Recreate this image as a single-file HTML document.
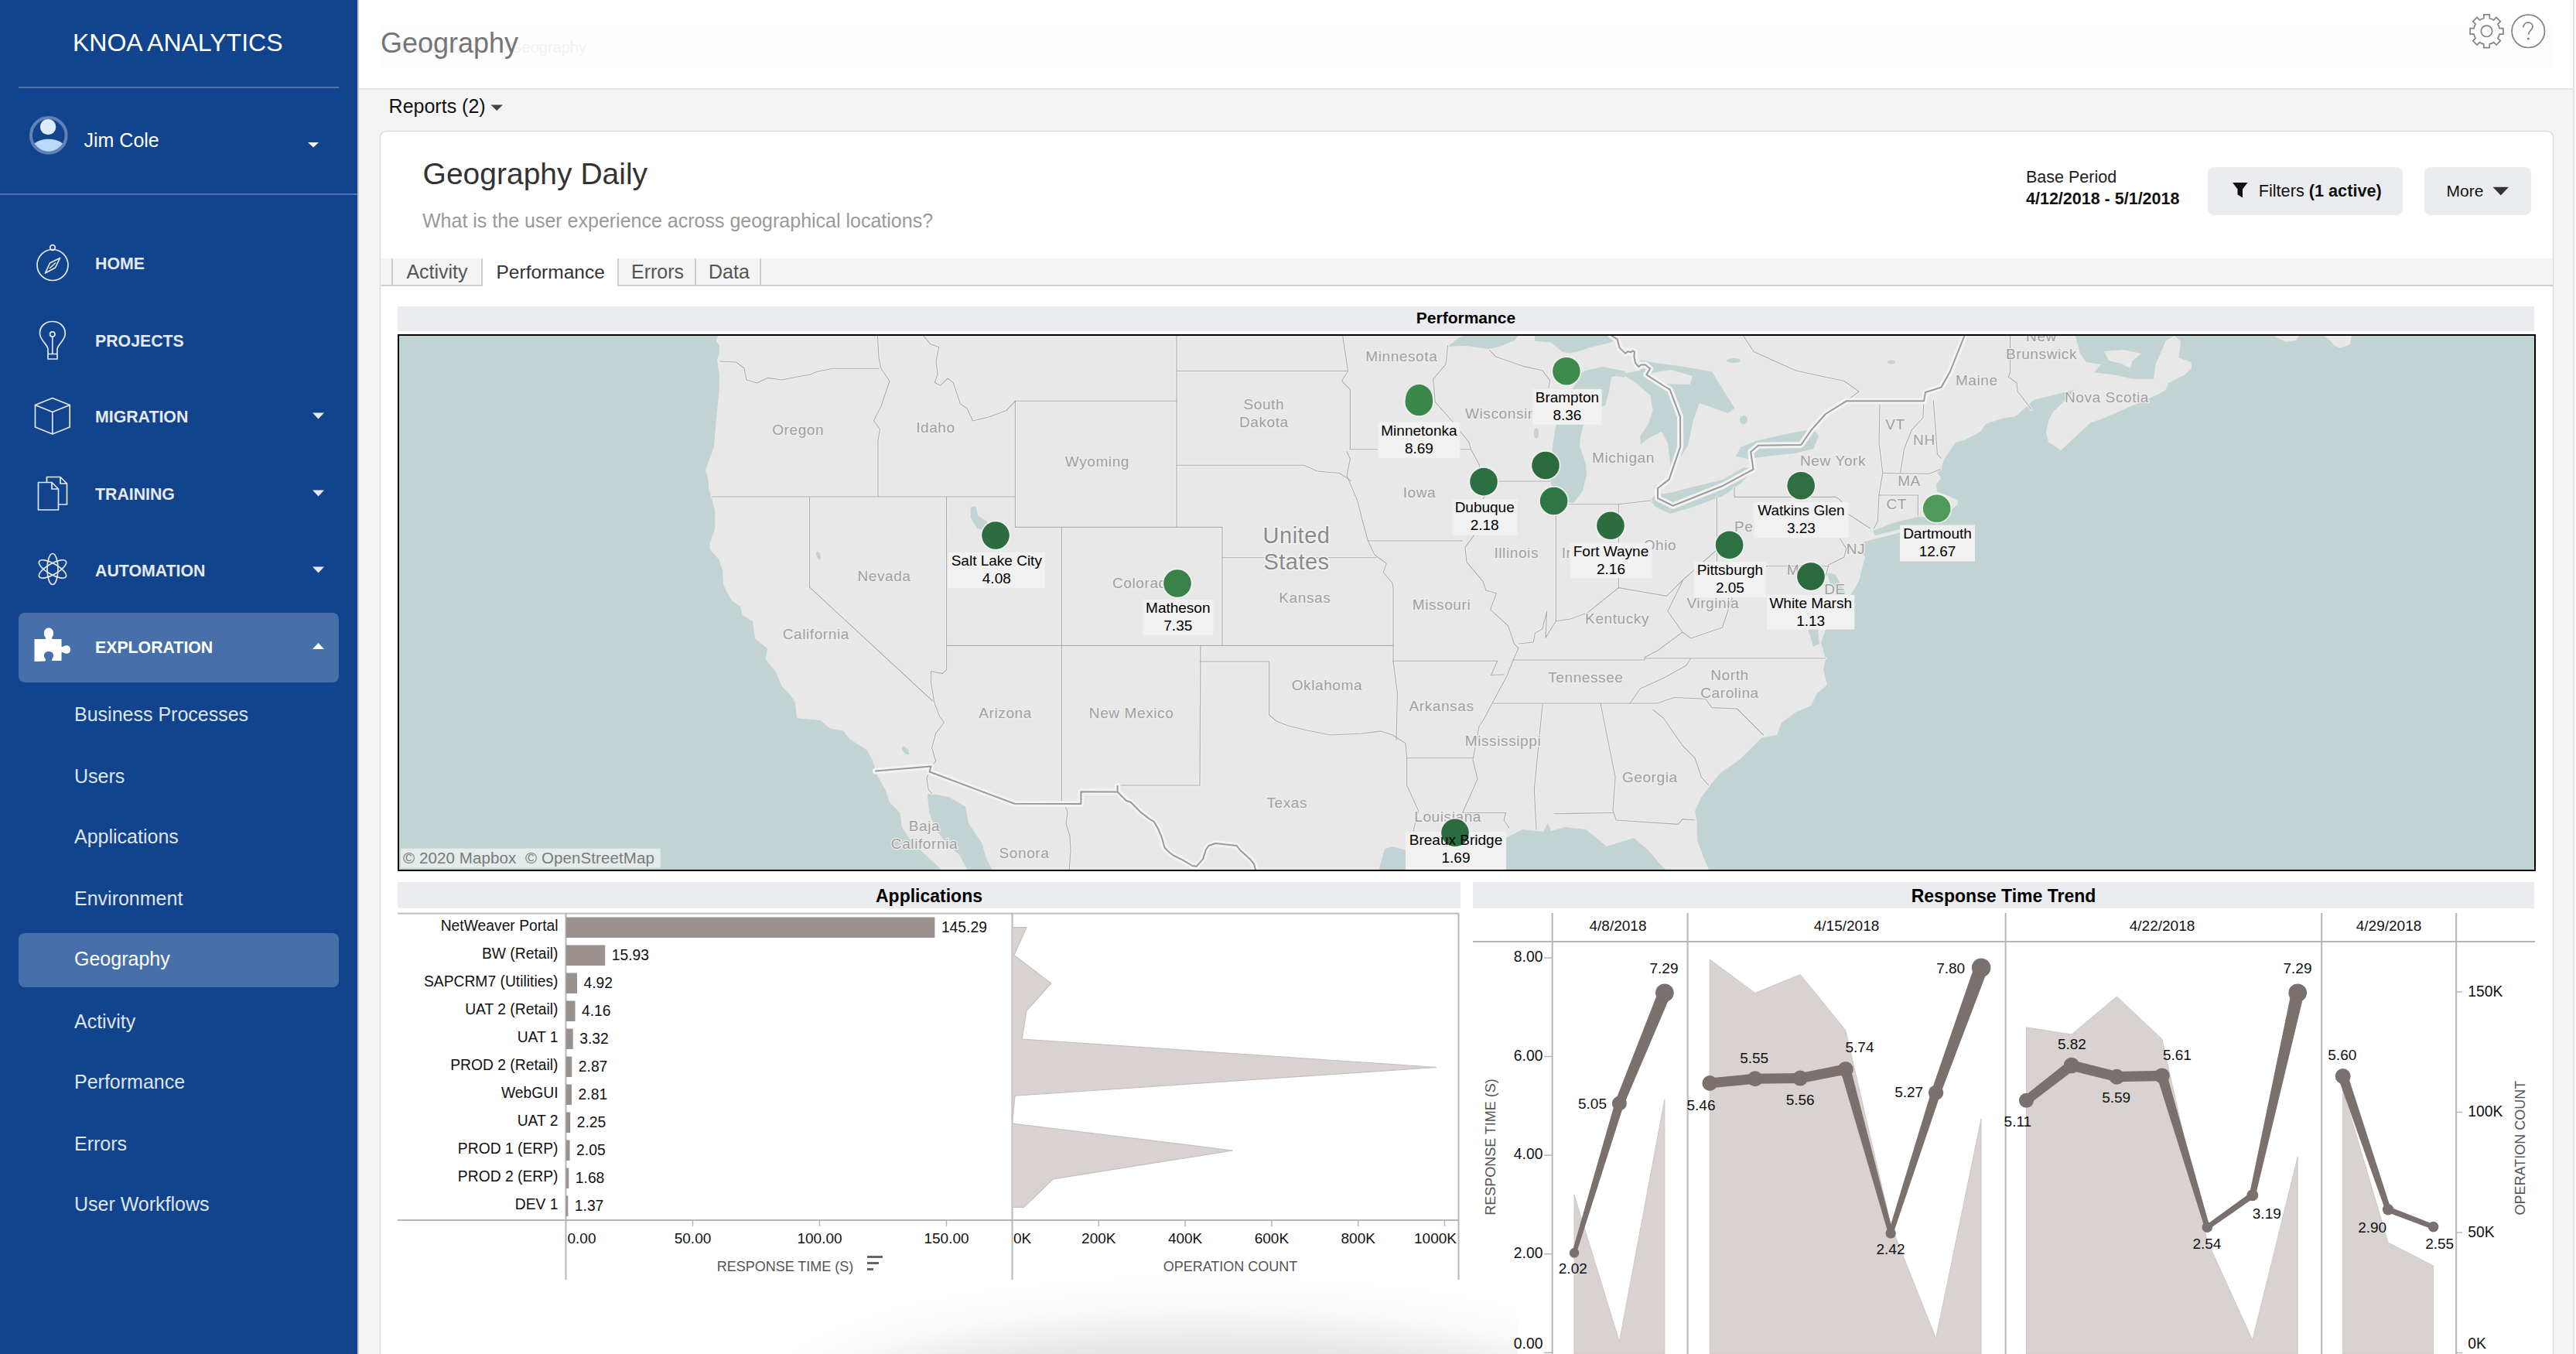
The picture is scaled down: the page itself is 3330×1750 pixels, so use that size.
<!DOCTYPE html><html><head><meta charset="utf-8"><title>Geography</title><style>html,body{margin:0;padding:0;width:3330px;height:1750px;overflow:hidden;background:#f4f4f4}svg{display:block;font-family:"Liberation Sans",sans-serif}</style></head><body>
<svg width="3330" height="1750" viewBox="0 0 3330 1750">
<defs><clipPath id="mapclip"><rect x="516" y="434" width="2760" height="690"/></clipPath><filter id="blur" x="-50%" y="-50%" width="200%" height="200%"><feGaussianBlur stdDeviation="35"/></filter><clipPath id="shclip"><rect x="492" y="1600" width="1470" height="150"/></clipPath></defs>
<rect x="0" y="0" width="3330" height="1750" fill="#f4f4f4" />
<rect x="462" y="0" width="2864" height="114" fill="#ffffff" />
<rect x="462" y="114" width="2864" height="2" fill="#e3e3e3" />
<rect x="493" y="31" width="2807" height="58" fill="#fdfdfd" rx="8" />
<rect x="3326" y="0" width="2" height="1750" fill="#e2e2e2" />
<rect x="3328" y="0" width="2" height="1750" fill="#fafafa" />
<text x="517.0" y="68.0" font-size="20" fill="#f1f1f4" text-anchor="start" >Exploration</text>
<text x="659.0" y="68.0" font-size="20" fill="#f1f1f4" text-anchor="start" >Geography</text>
<text x="492.0" y="67.8" font-size="36" fill="#757575" text-anchor="start" >Geography</text>
<path d="M3210.75,23.72 L3210.75,18.90 L3218.25,18.90 L3218.25,23.72 A17.0,17.0 0 0 1 3223.57,25.92 L3226.98,22.52 L3232.28,27.82 L3228.88,31.23 A17.0,17.0 0 0 1 3231.08,36.55 L3235.90,36.55 L3235.90,44.05 L3231.08,44.05 A17.0,17.0 0 0 1 3228.88,49.37 L3232.28,52.78 L3226.98,58.08 L3223.57,54.68 A17.0,17.0 0 0 1 3218.25,56.88 L3218.25,61.70 L3210.75,61.70 L3210.75,56.88 A17.0,17.0 0 0 1 3205.43,54.68 L3202.02,58.08 L3196.72,52.78 L3200.12,49.37 A17.0,17.0 0 0 1 3197.92,44.05 L3193.10,44.05 L3193.10,36.55 L3197.92,36.55 A17.0,17.0 0 0 1 3200.12,31.23 L3196.72,27.82 L3202.02,22.52 L3205.43,25.92 A17.0,17.0 0 0 1 3210.75,23.72 Z" fill="none" stroke="#828282" stroke-width="1.7" stroke-linejoin="miter"/>
<circle cx="3214.5" cy="40.3" r="7.2" fill="none" stroke="#828282" stroke-width="1.7"/>
<circle cx="3268.3" cy="40.3" r="21.2" fill="none" stroke="#828282" stroke-width="1.7"/>
<path d="M3262,35.6 C3262,31.5 3264.8,29.1 3268.3,29.1 C3271.8,29.1 3274,31.6 3274,34.4 C3274,38.6 3268.5,39.2 3268.5,44.7" fill="none" stroke="#828282" stroke-width="1.7"/>
<circle cx="3268.4" cy="50" r="1.6" fill="#828282"/>
<rect x="462" y="0" width="2" height="1750" fill="#c9c9c9" />
<rect x="0" y="0" width="462" height="1750" fill="#12438d" />
<text x="94.0" y="66.2" font-size="32" fill="#ffffff" text-anchor="start" >KNOA ANALYTICS</text>
<rect x="24" y="112" width="414" height="2" fill="#4f74ab" />
<clipPath id="avclip"><circle cx="62.8" cy="174.9" r="21.5"/></clipPath>
<g clip-path="url(#avclip)"><ellipse cx="62.8" cy="193.5" rx="22.5" ry="13.8" fill="#b9dafa"/></g>
<circle cx="62.1" cy="164" r="10.2" fill="#ddecfc"/>
<circle cx="62.8" cy="174.9" r="22.8" fill="none" stroke="#6281b6" stroke-width="4"/>
<text x="108.5" y="190.0" font-size="25" fill="#ffffff" text-anchor="start" >Jim Cole</text>
<polygon points="398.0,184.0 412.0,184.0 405.0,190.5" fill="#ffffff" />
<rect x="0" y="250" width="462" height="2" fill="#4f74ab" />
<text x="123.0" y="348.0" font-size="21.3" fill="#e4e9f3" font-weight="700" text-anchor="start" >HOME</text>
<text x="123.0" y="448.0" font-size="21.3" fill="#e4e9f3" font-weight="700" text-anchor="start" >PROJECTS</text>
<text x="123.0" y="546.0" font-size="21.3" fill="#e4e9f3" font-weight="700" text-anchor="start" >MIGRATION</text>
<text x="123.0" y="646.0" font-size="21.3" fill="#e4e9f3" font-weight="700" text-anchor="start" >TRAINING</text>
<text x="123.0" y="745.0" font-size="21.3" fill="#e4e9f3" font-weight="700" text-anchor="start" >AUTOMATION</text>
<polygon points="404.0,533.5 419.0,533.5 411.5,541.5" fill="#e4e9f3" />
<polygon points="404.0,633.5 419.0,633.5 411.5,641.5" fill="#e4e9f3" />
<polygon points="404.0,732.5 419.0,732.5 411.5,740.5" fill="#e4e9f3" />
<rect x="24" y="792" width="414" height="90" fill="#4770ab" rx="8" />
<text x="123.0" y="844.0" font-size="21.3" fill="#ffffff" font-weight="700" text-anchor="start" >EXPLORATION</text>
<polygon points="404.0,839.0 419.0,839.0 411.5,831.0" fill="#ffffff" />
<circle cx="68" cy="342.5" r="20" fill="none" stroke="#e4e9f3" stroke-width="1.7" stroke-linejoin="round" stroke-linecap="round"/>
<circle cx="68" cy="320" r="3.3" fill="none" stroke="#e4e9f3" stroke-width="1.7" stroke-linejoin="round" stroke-linecap="round"/>
<polygon points="58.5,353 64.5,340 77.5,333.5 71.5,346" fill="none" stroke="#e4e9f3" stroke-width="1.7" stroke-linejoin="round" stroke-linecap="round"/>
<line x1="64.5" y1="346.5" x2="71.5" y2="340" fill="none" stroke="#e4e9f3" stroke-width="1.7" stroke-linejoin="round" stroke-linecap="round"/>
<path d="M62,464 L62,451 C62,446 52,440 51.5,431.5 C51,421.5 59,415.5 67.8,415.5 C76.5,415.5 84.5,421.5 84.3,431.5 C84,440 74,446 74,451 L74,464 Z M62,457.5 L74,457.5" fill="none" stroke="#e4e9f3" stroke-width="1.7" stroke-linejoin="round" stroke-linecap="round"/>
<circle cx="67.8" cy="432" r="3.2" fill="none" stroke="#e4e9f3" stroke-width="1.7" stroke-linejoin="round" stroke-linecap="round"/>
<line x1="67.8" y1="435.2" x2="67.8" y2="457.5" fill="none" stroke="#e4e9f3" stroke-width="1.7" stroke-linejoin="round" stroke-linecap="round"/>
<path d="M67.8,514.5 L90.2,523.5 L90.2,552 L67.8,561 L45.5,552 L45.5,523.5 Z M45.5,523.5 L67.8,532.5 L90.2,523.5 M67.8,532.5 L67.8,561" fill="none" stroke="#e4e9f3" stroke-width="1.7" stroke-linejoin="round" stroke-linecap="round"/>
<path d="M60.5,623 L60.5,616.5 L78,616.5 L86.5,625 L86.5,652 L75.5,652 M78,616.5 L78,625 L86.5,625" fill="none" stroke="#e4e9f3" stroke-width="1.7" stroke-linejoin="round" stroke-linecap="round"/>
<path d="M49.5,623.5 L67,623.5 L75.5,632 L75.5,659 L49.5,659 Z M67,623.5 L67,632 L75.5,632" fill="none" stroke="#e4e9f3" stroke-width="1.7" stroke-linejoin="round" stroke-linecap="round"/>
<ellipse cx="68" cy="735.5" rx="7" ry="20" fill="none" stroke="#e4e9f3" stroke-width="1.7" stroke-linejoin="round" stroke-linecap="round"/>
<ellipse cx="68" cy="735.5" rx="7" ry="20" transform="rotate(60 68 735.5)" fill="none" stroke="#e4e9f3" stroke-width="1.7" stroke-linejoin="round" stroke-linecap="round"/>
<ellipse cx="68" cy="735.5" rx="7" ry="20" transform="rotate(-60 68 735.5)" fill="none" stroke="#e4e9f3" stroke-width="1.7" stroke-linejoin="round" stroke-linecap="round"/>
<path d="M44.5,826 L58,826 C59,826 59.5,825 58.5,823.5 C55.5,820 56.5,811.5 63,811.5 C69.5,811.5 70.5,820 67.5,823.5 C66.5,825 67,826 68,826 L79.5,826 L79.5,835 C79.5,836 80.5,836.5 82,835.5 C85.5,833 91,834 91,839.5 C91,845 85.5,846 82,843.5 C80.5,842.5 79.5,843 79.5,844 L79.5,854 L68,854 C67,854 66.5,853 67.5,851.5 C70.5,848 69.5,842 63,842 C56.5,842 55.5,848 58.5,851.5 C59.5,853 59,854 58,854.5 L44.5,855 Z" fill="#ffffff"/>
<rect x="24" y="1206" width="414" height="70" fill="#4770ab" rx="8" />
<text x="96.0" y="932.0" font-size="25" fill="#dfe5ef" text-anchor="start" >Business Processes</text>
<text x="96.0" y="1011.5" font-size="25" fill="#dfe5ef" text-anchor="start" >Users</text>
<text x="96.0" y="1090.0" font-size="25" fill="#dfe5ef" text-anchor="start" >Applications</text>
<text x="96.0" y="1170.0" font-size="25" fill="#dfe5ef" text-anchor="start" >Environment</text>
<text x="96.0" y="1248.0" font-size="25" fill="#ffffff" text-anchor="start" >Geography</text>
<text x="96.0" y="1328.5" font-size="25" fill="#dfe5ef" text-anchor="start" >Activity</text>
<text x="96.0" y="1406.7" font-size="25" fill="#dfe5ef" text-anchor="start" >Performance</text>
<text x="96.0" y="1486.5" font-size="25" fill="#dfe5ef" text-anchor="start" >Errors</text>
<text x="96.0" y="1564.6" font-size="25" fill="#dfe5ef" text-anchor="start" >User Workflows</text>
<text x="502.6" y="145.8" font-size="25" fill="#111111" text-anchor="start" >Reports (2)</text>
<polygon points="634.5,135.5 650.0,135.5 642.2,143.0" fill="#444444" />
<rect x="491.5" y="169.5" width="2809" height="1700" rx="8" fill="#ffffff" stroke="#dcdcdc" stroke-width="1.5"/>
<text x="546.6" y="237.5" font-size="39" fill="#333333" text-anchor="start" >Geography Daily</text>
<text x="546.0" y="293.7" font-size="25" fill="#999999" text-anchor="start" >What is the user experience across geographical locations?</text>
<text x="2619.0" y="236.3" font-size="21.5" fill="#222222" text-anchor="start" >Base Period</text>
<text x="2619.0" y="263.8" font-size="21.5" fill="#111111" font-weight="700" text-anchor="start" >4/12/2018 - 5/1/2018</text>
<rect x="2854" y="216" width="252" height="62" fill="#ebecef" rx="8" />
<path d="M2886,236 L2905.5,236 L2899,244.5 L2899,255.5 L2892.5,251.5 L2892.5,244.5 Z" fill="#111"/>
<text x="2919.7" y="254" font-size="21.7" fill="#111">Filters <tspan font-weight="700">(1 active)</tspan></text>
<rect x="3134" y="216" width="138" height="62" fill="#ebecef" rx="8" />
<text x="3162.5" y="254.0" font-size="21" fill="#111111" text-anchor="start" >More</text>
<polygon points="3222.5,241.8 3243.0,241.8 3232.8,252.6" fill="#333333" />
<rect x="492.5" y="334" width="2807.5" height="35" fill="#f4f4f4" />
<rect x="492.5" y="368" width="2807.5" height="2" fill="#cdcdcd" />
<rect x="623" y="332" width="176" height="38" fill="#ffffff" />
<rect x="506" y="334" width="2" height="36" fill="#cdcdcd" />
<rect x="622" y="334" width="2" height="36" fill="#cdcdcd" />
<rect x="798" y="334" width="2" height="36" fill="#cdcdcd" />
<rect x="898" y="334" width="2" height="36" fill="#cdcdcd" />
<rect x="982" y="334" width="2" height="36" fill="#cdcdcd" />
<text x="525.4" y="359.8" font-size="25" fill="#555555" text-anchor="start" >Activity</text>
<text x="641.5" y="359.8" font-size="24.5" fill="#333333" text-anchor="start" >Performance</text>
<text x="816.0" y="359.8" font-size="25" fill="#555555" text-anchor="start" >Errors</text>
<text x="916.0" y="359.8" font-size="25" fill="#555555" text-anchor="start" >Data</text>
<rect x="514" y="396" width="2762" height="32" fill="#ebecf0" />
<text x="1895.0" y="417.6" font-size="21" fill="#000000" font-weight="700" text-anchor="middle" >Performance</text>
<rect x="514" y="1140" width="1374" height="34" fill="#ebecf0" />
<text x="1201.0" y="1166.0" font-size="23" fill="#000000" font-weight="700" text-anchor="middle" >Applications</text>
<rect x="1904" y="1140" width="1372" height="34" fill="#ebecf0" />
<text x="2590.0" y="1166.0" font-size="23" fill="#000000" font-weight="700" text-anchor="middle" >Response Time Trend</text>
<g clip-path="url(#shclip)"><ellipse cx="1560" cy="1840" rx="520" ry="120" fill="#000" fill-opacity="0.13" filter="url(#blur)"/></g>
<g clip-path="url(#mapclip)">
<rect x="516" y="434" width="2760" height="690" fill="#e8e8e8" />
<polygon points="516.0,434.0 928.0,434.0 925.7,441.0 929.8,446.0 929.8,457.0 927.0,465.0 929.8,484.0 929.8,501.0 924.3,560.0 923.0,577.0 912.0,608.0 915.6,620.0 916.2,632.0 920.3,645.0 924.3,661.0 924.3,683.0 917.5,702.0 917.5,710.0 929.8,723.5 933.8,737.0 935.2,756.0 943.3,772.0 946.0,776.0 957.0,784.0 959.6,795.0 973.0,803.0 976.0,825.0 992.0,838.5 989.6,852.0 1003.0,868.4 1011.0,887.4 1019.4,895.6 1027.6,906.4 1030.0,928.0 1060.0,931.0 1073.8,942.0 1090.0,944.5 1098.0,955.0 1120.0,969.0 1128.0,982.5 1133.6,1001.5 1144.4,1020.6 1150.0,1037.0 1163.5,1050.5 1166.0,1069.5 1177.0,1086.0 1193.4,1102.0 1214.0,1121.0 1217.0,1126.0 516.0,1126.0" fill="#c1d3d3" />
<polygon points="1199.3,1025.9 1210.0,1027.0 1226.7,1030.0 1247.9,1042.8 1252.0,1064.0 1269.0,1089.3 1275.3,1110.4 1283.8,1126.0 1252.0,1126.0 1239.4,1104.0 1226.7,1093.5 1209.8,1072.4 1201.4,1051.2 1199.3,1030.0" fill="#c1d3d3" />
<polygon points="1782.0,1126.0 1790.0,1097.0 1800.0,1094.0 1817.0,1099.0 1860.0,1090.0 1947.0,1083.0 1968.0,1072.0 1995.0,1075.0 2001.0,1064.0 2005.0,1074.0 2023.0,1069.0 2050.0,1072.0 2077.0,1094.0 2112.0,1083.0 2131.0,1099.0 2145.0,1116.0 2156.0,1126.0" fill="#c1d3d3" />
<polygon points="3276.0,434.0 2683.0,434.0 2689.0,457.0 2697.0,468.0 2716.0,471.0 2697.0,492.5 2683.0,503.0 2661.5,509.0 2629.0,517.0 2606.0,538.0 2588.0,541.0 2567.0,548.0 2560.0,558.0 2540.0,568.5 2528.0,572.0 2521.0,582.0 2513.0,594.0 2509.5,606.0 2504.0,611.0 2509.5,618.0 2503.0,626.0 2504.0,635.0 2516.0,640.0 2531.5,646.6 2530.0,653.0 2521.0,660.0 2500.0,668.0 2480.0,674.0 2458.0,688.0 2430.0,695.0 2411.0,700.0 2406.0,702.5 2406.0,715.5 2411.0,719.0 2403.0,751.0 2398.0,760.0 2388.0,775.0 2372.0,790.0 2365.0,805.0 2360.0,814.0 2354.0,830.0 2360.0,852.0 2357.0,866.0 2362.0,885.0 2349.0,896.0 2341.0,912.0 2322.0,920.0 2303.0,934.0 2297.0,950.0 2278.0,953.0 2262.0,969.0 2248.0,982.5 2224.0,999.0 2213.0,1012.0 2199.0,1031.0 2191.0,1048.0 2194.0,1064.0 2194.0,1086.0 2202.0,1107.5 2210.0,1126.0 3276.0,1126.0" fill="#c1d3d3" />
<polygon points="2421.0,686.0 2450.0,675.0 2480.0,668.0 2500.0,668.0 2480.0,676.0 2456.0,684.0 2424.0,692.0" fill="#c1d3d3" />
<polygon points="2333.0,792.0 2343.0,790.0 2350.0,812.0 2352.0,832.0 2344.0,836.0 2338.0,815.0" fill="#c1d3d3" />
<polygon points="2362.0,740.0 2372.0,742.0 2385.0,765.0 2378.0,772.0 2366.0,756.0" fill="#c1d3d3" />
<polygon points="2648.0,544.0 2645.0,557.7 2648.0,571.3 2664.0,582.2 2702.0,546.8 2724.0,538.7 2748.5,527.8 2792.0,508.8 2800.0,503.4 2803.0,495.2 2824.6,484.3 2832.7,476.2 2832.7,468.0 2816.4,462.6 2819.0,440.9 2811.0,434.0 2800.0,440.0 2786.5,470.8 2784.0,489.8 2756.6,489.8 2732.0,484.3 2707.7,481.6 2690.0,490.0 2683.3,500.7 2675.0,511.5 2653.4,533.3" fill="#e8e8e8" />
<polygon points="2720.0,454.0 2745.0,452.0 2768.0,457.0 2756.0,467.0 2754.0,476.0 2742.0,470.0 2726.0,466.0" fill="#e8e8e8" />
<polygon points="2939.0,434.0 2972.0,434.0 2968.0,440.0 2955.0,442.0" fill="#e8e8e8" />
<polygon points="3004.0,434.0 3040.0,434.0 3038.0,445.0 3025.0,450.0 3018.0,447.0 3012.0,440.0" fill="#e8e8e8" />
<polygon points="1870.0,449.0 1878.0,443.0 1885.0,437.0 1893.0,434.0 1962.0,434.0 1958.0,440.0 1937.0,448.4 1924.0,450.9 1912.0,449.4 1895.0,447.0 1877.0,447.5" fill="#c1d3d3" />
<polygon points="1984.0,434.0 1984.0,440.7 2005.0,442.6 2020.0,455.2 2029.6,456.2 2040.0,454.3 2054.0,449.4 2083.0,442.6 2091.0,434.0" fill="#c1d3d3" />
<polygon points="2011.0,552.0 2007.0,577.0 2003.6,621.0 2010.0,640.0 2030.0,650.0 2035.0,649.0 2046.0,634.0 2051.0,614.0 2050.0,600.0 2042.0,577.0 2043.0,565.0 2046.0,552.0 2060.0,530.0 2075.0,524.0 2080.0,506.0 2083.0,487.0 2091.0,486.0 2100.0,488.0 2101.0,480.0 2091.0,478.0 2072.0,474.0 2049.0,479.0 2042.5,484.0 2036.0,498.0 2020.0,520.0" fill="#c1d3d3" />
<ellipse cx="1986" cy="560" rx="3" ry="7" fill="#c1d3d3"/>
<polygon points="2096.0,483.6 2120.5,478.7 2120.5,465.0 2140.0,469.0 2177.0,474.0 2213.0,480.4 2242.3,527.5 2234.0,534.0 2196.8,521.0 2188.7,543.7 2182.0,576.0 2166.0,600.6 2156.0,613.6 2159.4,600.6 2156.0,573.0 2148.0,558.0 2133.5,565.0 2120.5,574.6 2120.5,563.0 2130.0,550.0 2136.7,530.7 2133.5,511.0 2110.7,491.7" fill="#c1d3d3" />
<polygon points="2135.0,482.0 2160.0,478.0 2188.0,486.0 2185.0,497.0 2150.0,496.0 2137.0,490.0" fill="#e8e8e8" />
<ellipse cx="2143" cy="630" rx="5" ry="4" fill="#c1d3d3"/>
<polygon points="2134.0,647.0 2140.0,655.0 2159.0,664.0 2186.0,656.0 2227.0,641.0 2250.0,625.0 2268.0,606.0 2254.0,604.0 2227.0,620.0 2186.0,630.0 2159.0,637.0 2139.0,640.0" fill="#c1d3d3" />
<polygon points="2244.0,590.0 2250.0,578.0 2270.0,570.0 2300.0,563.0 2330.0,557.0 2345.0,555.0 2351.0,564.0 2344.0,580.0 2320.0,586.0 2290.0,589.0 2260.0,593.0" fill="#c1d3d3" />
<ellipse cx="2241" cy="466" rx="9" ry="3" fill="#c1d3d3"/>
<ellipse cx="2445" cy="468" rx="5" ry="2.5" fill="#c1d3d3"/>
<ellipse cx="2254" cy="542.5" rx="5" ry="5.5" fill="#c1d3d3"/>
<polygon points="1254.8,655.5 1261.5,654.2 1264.3,666.4 1276.5,674.6 1272.4,685.4 1263.0,682.7 1254.8,669.0" fill="#c1d3d3" />
<ellipse cx="1058" cy="718" rx="2.5" ry="5.5" transform="rotate(-20 1058 718)" fill="#c1d3d3"/>
<ellipse cx="1170.5" cy="970" rx="3" ry="6.5" transform="rotate(-40 1170.5 970)" fill="#c1d3d3"/>
<polyline points="930.0,467.0 951.5,468.0 962.0,476.0 965.0,491.0 978.7,495.0 992.0,488.4 1011.0,491.0 1030.0,487.0 1046.6,484.3 1057.5,480.0 1076.5,476.2 1136.0,476.2" fill="none" stroke="#efefef" stroke-width="3.2" stroke-linejoin="round" stroke-linecap="round" />
<polyline points="1134.4,434.0 1136.0,462.6 1139.0,476.2 1150.0,492.5 1139.0,525.0 1129.5,544.0 1137.6,555.0 1135.0,568.6 1135.0,642.0" fill="none" stroke="#efefef" stroke-width="3.2" stroke-linejoin="round" stroke-linecap="round" />
<polyline points="920.0,642.0 1312.4,642.0" fill="none" stroke="#efefef" stroke-width="3.2" stroke-linejoin="round" stroke-linecap="round" />
<polyline points="1046.6,642.0 1046.6,759.0 1205.6,906.0" fill="none" stroke="#efefef" stroke-width="3.2" stroke-linejoin="round" stroke-linecap="round" />
<polyline points="1223.5,642.0 1223.6,865.3 1218.3,870.6 1203.5,867.5 1203.5,882.0 1207.7,907.6 1214.0,924.5 1220.4,934.0 1209.8,947.7 1204.6,966.7 1209.8,983.6 1203.5,991.0" fill="none" stroke="#efefef" stroke-width="3.2" stroke-linejoin="round" stroke-linecap="round" />
<polyline points="1201.4,997.4 1198.0,1006.0 1200.0,1020.0 1205.0,1026.0" fill="none" stroke="#efefef" stroke-width="3.2" stroke-linejoin="round" stroke-linecap="round" />
<polyline points="1376.7,1040.0 1380.0,1050.0 1378.0,1065.0 1383.0,1080.0 1384.0,1100.0 1382.0,1126.0" fill="none" stroke="#efefef" stroke-width="3.2" stroke-linejoin="round" stroke-linecap="round" />
<polyline points="1372.4,681.4 1372.4,1039.0" fill="none" stroke="#efefef" stroke-width="3.2" stroke-linejoin="round" stroke-linecap="round" />
<polyline points="1312.4,681.4 1580.0,681.4" fill="none" stroke="#efefef" stroke-width="3.2" stroke-linejoin="round" stroke-linecap="round" />
<polyline points="1312.4,518.3 1312.4,681.4" fill="none" stroke="#efefef" stroke-width="3.2" stroke-linejoin="round" stroke-linecap="round" />
<polyline points="1312.4,518.3 1521.0,518.3" fill="none" stroke="#efefef" stroke-width="3.2" stroke-linejoin="round" stroke-linecap="round" />
<polyline points="1521.0,434.0 1521.0,681.4" fill="none" stroke="#efefef" stroke-width="3.2" stroke-linejoin="round" stroke-linecap="round" />
<polyline points="1521.0,479.5 1742.5,479.5" fill="none" stroke="#efefef" stroke-width="3.2" stroke-linejoin="round" stroke-linecap="round" />
<polyline points="1521.0,601.2 1685.5,601.2 1703.0,609.0 1731.7,611.5 1746.6,621.6" fill="none" stroke="#efefef" stroke-width="3.2" stroke-linejoin="round" stroke-linecap="round" />
<polyline points="1735.7,434.0 1742.5,479.5 1734.4,492.5 1745.3,503.4 1745.3,580.8" fill="none" stroke="#efefef" stroke-width="3.2" stroke-linejoin="round" stroke-linecap="round" />
<polyline points="1745.3,580.8 1901.5,580.8" fill="none" stroke="#efefef" stroke-width="3.2" stroke-linejoin="round" stroke-linecap="round" />
<polyline points="1741.0,583.5 1745.3,593.0 1741.0,614.8 1754.8,647.4 1760.2,669.0 1768.4,699.0 1776.8,716.8 1792.2,728.3 1788.3,740.0 1799.9,753.3 1801.0,760.0 1801.0,855.0" fill="none" stroke="#efefef" stroke-width="3.2" stroke-linejoin="round" stroke-linecap="round" />
<polyline points="1768.4,699.0 1890.6,699.0" fill="none" stroke="#efefef" stroke-width="3.2" stroke-linejoin="round" stroke-linecap="round" />
<polyline points="1580.0,720.8 1779.2,720.8" fill="none" stroke="#efefef" stroke-width="3.2" stroke-linejoin="round" stroke-linecap="round" />
<polyline points="1580.0,681.4 1580.0,834.4" fill="none" stroke="#efefef" stroke-width="3.2" stroke-linejoin="round" stroke-linecap="round" />
<polyline points="1223.5,834.4 1801.0,834.4" fill="none" stroke="#efefef" stroke-width="3.2" stroke-linejoin="round" stroke-linecap="round" />
<polyline points="1551.8,834.4 1551.8,855.0 1551.0,1015.0" fill="none" stroke="#efefef" stroke-width="3.2" stroke-linejoin="round" stroke-linecap="round" />
<polyline points="1551.0,855.0 1640.6,855.0 1640.6,924.0 1650.0,932.0 1665.0,938.0 1690.0,944.0 1720.0,950.0 1760.0,948.0 1785.0,945.0 1800.0,950.0 1817.0,960.8 1818.6,979.8 1818.6,1015.0 1833.6,1047.7 1826.8,1075.0" fill="none" stroke="#efefef" stroke-width="3.2" stroke-linejoin="round" stroke-linecap="round" />
<polyline points="1801.0,855.0 1806.4,895.6 1805.0,956.7" fill="none" stroke="#efefef" stroke-width="3.2" stroke-linejoin="round" stroke-linecap="round" />
<polyline points="1801.0,854.3 1935.7,854.3 1927.6,872.5 1944.0,872.0" fill="none" stroke="#efefef" stroke-width="3.2" stroke-linejoin="round" stroke-linecap="round" />
<polyline points="1818.6,979.8 1904.0,979.8" fill="none" stroke="#efefef" stroke-width="3.2" stroke-linejoin="round" stroke-linecap="round" />
<polyline points="1443.6,1015.0 1551.0,1015.0" fill="none" stroke="#efefef" stroke-width="3.2" stroke-linejoin="round" stroke-linecap="round" />
<polyline points="1898.8,571.3 1901.5,580.8 1912.0,600.0 1917.0,622.0 1920.0,640.0 1905.0,665.0 1905.5,691.9 1894.0,707.2 1895.9,726.4 1917.0,751.4 1920.9,763.0 1934.3,766.8 1926.6,787.9 1949.7,809.0 1957.3,832.0 1963.0,837.8 1955.4,855.0 1947.7,874.3 1936.2,895.4 1919.0,928.0 1912.0,939.0 1904.0,982.0 1910.0,1007.0 1890.6,1050.5 1946.6,1050.5 1944.0,1060.0 1950.7,1070.0" fill="none" stroke="#efefef" stroke-width="3.2" stroke-linejoin="round" stroke-linecap="round" />
<polyline points="1871.6,446.3 1869.0,470.8 1852.6,489.8 1855.3,519.7 1877.0,544.0 1898.8,571.3" fill="none" stroke="#efefef" stroke-width="3.2" stroke-linejoin="round" stroke-linecap="round" />
<polyline points="1193.5,433.7 1202.8,444.8 1213.8,448.5 1210.0,467.0 1212.0,483.5 1208.3,494.6 1215.7,498.3 1225.0,489.0 1232.3,494.6 1241.5,522.3 1250.0,527.8 1257.5,544.0 1279.0,538.7 1301.0,530.5 1312.4,518.3" fill="none" stroke="#efefef" stroke-width="3.2" stroke-linejoin="round" stroke-linecap="round" />
<polyline points="1925.5,452.7 1933.6,460.9 1971.0,473.9 1993.7,478.7 2003.5,491.7 2001.8,501.5" fill="none" stroke="#efefef" stroke-width="3.2" stroke-linejoin="round" stroke-linecap="round" />
<polyline points="1917.0,622.0 2003.6,622.0" fill="none" stroke="#efefef" stroke-width="3.2" stroke-linejoin="round" stroke-linecap="round" />
<polyline points="2011.3,650.0 2011.3,802.8 1998.0,824.4 1999.6,789.8 1993.8,812.8 1984.2,818.6 1982.3,830.0 1963.0,832.0" fill="none" stroke="#efefef" stroke-width="3.2" stroke-linejoin="round" stroke-linecap="round" />
<polyline points="2011.3,802.8 2030.0,800.0 2052.0,792.0 2092.4,759.6 2154.4,770.4 2176.0,749.0 2219.0,711.0" fill="none" stroke="#efefef" stroke-width="3.2" stroke-linejoin="round" stroke-linecap="round" />
<polyline points="2011.3,651.8 2091.8,651.8 2134.0,647.0" fill="none" stroke="#efefef" stroke-width="3.2" stroke-linejoin="round" stroke-linecap="round" />
<polyline points="2092.4,652.0 2092.4,759.6" fill="none" stroke="#efefef" stroke-width="3.2" stroke-linejoin="round" stroke-linecap="round" />
<polyline points="2219.4,642.0 2219.4,731.7 2364.0,731.7" fill="none" stroke="#efefef" stroke-width="3.2" stroke-linejoin="round" stroke-linecap="round" />
<polyline points="2242.0,630.0 2242.0,642.4 2373.7,642.4 2380.0,647.2 2390.0,665.0 2417.6,683.0" fill="none" stroke="#efefef" stroke-width="3.2" stroke-linejoin="round" stroke-linecap="round" />
<polyline points="2378.6,696.0 2386.7,709.0 2384.0,720.0 2364.0,730.0 2360.0,745.0" fill="none" stroke="#efefef" stroke-width="3.2" stroke-linejoin="round" stroke-linecap="round" />
<polyline points="2284.0,731.7 2262.0,745.0 2240.0,770.0 2226.5,811.0 2185.7,825.0 2175.0,817.0 2155.8,790.0 2176.0,749.0" fill="none" stroke="#efefef" stroke-width="3.2" stroke-linejoin="round" stroke-linecap="round" />
<polyline points="2175.0,817.0 2142.3,841.2 2126.0,849.4" fill="none" stroke="#efefef" stroke-width="3.2" stroke-linejoin="round" stroke-linecap="round" />
<polyline points="1954.8,853.0 2126.0,853.0 2126.0,850.7 2359.6,850.7" fill="none" stroke="#efefef" stroke-width="3.2" stroke-linejoin="round" stroke-linecap="round" />
<polyline points="2185.7,850.7 2180.0,860.0 2150.4,876.5 2120.5,890.0 2107.0,909.0" fill="none" stroke="#efefef" stroke-width="3.2" stroke-linejoin="round" stroke-linecap="round" />
<polyline points="1930.3,909.0 2142.3,909.0 2164.0,901.5 2204.8,903.2 2213.0,914.6 2245.5,916.0 2279.5,950.0" fill="none" stroke="#efefef" stroke-width="3.2" stroke-linejoin="round" stroke-linecap="round" />
<polyline points="2136.8,917.3 2150.4,928.2 2174.9,963.5 2191.0,979.8 2199.3,1004.3 2208.8,1015.0" fill="none" stroke="#efefef" stroke-width="3.2" stroke-linejoin="round" stroke-linecap="round" />
<polyline points="2069.0,909.0 2088.0,1004.3 2085.0,1047.7 2089.3,1060.0 2169.4,1065.4 2175.0,1058.6 2191.0,1060.0" fill="none" stroke="#efefef" stroke-width="3.2" stroke-linejoin="round" stroke-linecap="round" />
<polyline points="2009.0,1051.8 2085.0,1050.5" fill="none" stroke="#efefef" stroke-width="3.2" stroke-linejoin="round" stroke-linecap="round" />
<polyline points="1994.0,910.5 1983.3,1020.6 1986.0,1072.0" fill="none" stroke="#efefef" stroke-width="3.2" stroke-linejoin="round" stroke-linecap="round" />
<polyline points="2598.5,434.0 2598.5,481.6 2596.0,487.0 2607.0,495.0 2608.0,506.0 2612.6,511.5 2626.0,529.2" fill="none" stroke="#efefef" stroke-width="3.2" stroke-linejoin="round" stroke-linecap="round" />
<polyline points="2499.3,518.0 2504.4,587.2 2509.5,592.3" fill="none" stroke="#efefef" stroke-width="3.2" stroke-linejoin="round" stroke-linecap="round" />
<polyline points="2487.0,518.3 2485.8,540.0 2471.0,556.2 2461.4,580.6 2456.6,611.5" fill="none" stroke="#efefef" stroke-width="3.2" stroke-linejoin="round" stroke-linecap="round" />
<polyline points="2430.0,518.3 2429.0,572.5 2433.8,611.5 2429.0,639.0 2427.3,673.2 2422.4,683.0" fill="none" stroke="#efefef" stroke-width="3.2" stroke-linejoin="round" stroke-linecap="round" />
<polyline points="2433.8,611.5 2494.0,612.3 2508.6,606.6" fill="none" stroke="#efefef" stroke-width="3.2" stroke-linejoin="round" stroke-linecap="round" />
<polyline points="2429.0,640.0 2479.3,640.0 2479.3,666.7" fill="none" stroke="#efefef" stroke-width="3.2" stroke-linejoin="round" stroke-linecap="round" />
<polyline points="2253.7,434.0 2267.0,454.5 2321.6,479.0 2384.0,492.5 2403.0,506.0 2386.8,518.3" fill="none" stroke="#efefef" stroke-width="3.2" stroke-linejoin="round" stroke-linecap="round" />
<polyline points="930.0,467.0 951.5,468.0 962.0,476.0 965.0,491.0 978.7,495.0 992.0,488.4 1011.0,491.0 1030.0,487.0 1046.6,484.3 1057.5,480.0 1076.5,476.2 1136.0,476.2" fill="none" stroke="#acacac" stroke-width="1.1" stroke-linejoin="round" stroke-linecap="round" />
<polyline points="1134.4,434.0 1136.0,462.6 1139.0,476.2 1150.0,492.5 1139.0,525.0 1129.5,544.0 1137.6,555.0 1135.0,568.6 1135.0,642.0" fill="none" stroke="#acacac" stroke-width="1.1" stroke-linejoin="round" stroke-linecap="round" />
<polyline points="920.0,642.0 1312.4,642.0" fill="none" stroke="#acacac" stroke-width="1.1" stroke-linejoin="round" stroke-linecap="round" />
<polyline points="1046.6,642.0 1046.6,759.0 1205.6,906.0" fill="none" stroke="#acacac" stroke-width="1.1" stroke-linejoin="round" stroke-linecap="round" />
<polyline points="1223.5,642.0 1223.6,865.3 1218.3,870.6 1203.5,867.5 1203.5,882.0 1207.7,907.6 1214.0,924.5 1220.4,934.0 1209.8,947.7 1204.6,966.7 1209.8,983.6 1203.5,991.0" fill="none" stroke="#acacac" stroke-width="1.1" stroke-linejoin="round" stroke-linecap="round" />
<polyline points="1201.4,997.4 1198.0,1006.0 1200.0,1020.0 1205.0,1026.0" fill="none" stroke="#acacac" stroke-width="1.1" stroke-linejoin="round" stroke-linecap="round" />
<polyline points="1376.7,1040.0 1380.0,1050.0 1378.0,1065.0 1383.0,1080.0 1384.0,1100.0 1382.0,1126.0" fill="none" stroke="#acacac" stroke-width="1.1" stroke-linejoin="round" stroke-linecap="round" />
<polyline points="1372.4,681.4 1372.4,1039.0" fill="none" stroke="#acacac" stroke-width="1.1" stroke-linejoin="round" stroke-linecap="round" />
<polyline points="1312.4,681.4 1580.0,681.4" fill="none" stroke="#acacac" stroke-width="1.1" stroke-linejoin="round" stroke-linecap="round" />
<polyline points="1312.4,518.3 1312.4,681.4" fill="none" stroke="#acacac" stroke-width="1.1" stroke-linejoin="round" stroke-linecap="round" />
<polyline points="1312.4,518.3 1521.0,518.3" fill="none" stroke="#acacac" stroke-width="1.1" stroke-linejoin="round" stroke-linecap="round" />
<polyline points="1521.0,434.0 1521.0,681.4" fill="none" stroke="#acacac" stroke-width="1.1" stroke-linejoin="round" stroke-linecap="round" />
<polyline points="1521.0,479.5 1742.5,479.5" fill="none" stroke="#acacac" stroke-width="1.1" stroke-linejoin="round" stroke-linecap="round" />
<polyline points="1521.0,601.2 1685.5,601.2 1703.0,609.0 1731.7,611.5 1746.6,621.6" fill="none" stroke="#acacac" stroke-width="1.1" stroke-linejoin="round" stroke-linecap="round" />
<polyline points="1735.7,434.0 1742.5,479.5 1734.4,492.5 1745.3,503.4 1745.3,580.8" fill="none" stroke="#acacac" stroke-width="1.1" stroke-linejoin="round" stroke-linecap="round" />
<polyline points="1745.3,580.8 1901.5,580.8" fill="none" stroke="#acacac" stroke-width="1.1" stroke-linejoin="round" stroke-linecap="round" />
<polyline points="1741.0,583.5 1745.3,593.0 1741.0,614.8 1754.8,647.4 1760.2,669.0 1768.4,699.0 1776.8,716.8 1792.2,728.3 1788.3,740.0 1799.9,753.3 1801.0,760.0 1801.0,855.0" fill="none" stroke="#acacac" stroke-width="1.1" stroke-linejoin="round" stroke-linecap="round" />
<polyline points="1768.4,699.0 1890.6,699.0" fill="none" stroke="#acacac" stroke-width="1.1" stroke-linejoin="round" stroke-linecap="round" />
<polyline points="1580.0,720.8 1779.2,720.8" fill="none" stroke="#acacac" stroke-width="1.1" stroke-linejoin="round" stroke-linecap="round" />
<polyline points="1580.0,681.4 1580.0,834.4" fill="none" stroke="#acacac" stroke-width="1.1" stroke-linejoin="round" stroke-linecap="round" />
<polyline points="1223.5,834.4 1801.0,834.4" fill="none" stroke="#acacac" stroke-width="1.1" stroke-linejoin="round" stroke-linecap="round" />
<polyline points="1551.8,834.4 1551.8,855.0 1551.0,1015.0" fill="none" stroke="#acacac" stroke-width="1.1" stroke-linejoin="round" stroke-linecap="round" />
<polyline points="1551.0,855.0 1640.6,855.0 1640.6,924.0 1650.0,932.0 1665.0,938.0 1690.0,944.0 1720.0,950.0 1760.0,948.0 1785.0,945.0 1800.0,950.0 1817.0,960.8 1818.6,979.8 1818.6,1015.0 1833.6,1047.7 1826.8,1075.0" fill="none" stroke="#acacac" stroke-width="1.1" stroke-linejoin="round" stroke-linecap="round" />
<polyline points="1801.0,855.0 1806.4,895.6 1805.0,956.7" fill="none" stroke="#acacac" stroke-width="1.1" stroke-linejoin="round" stroke-linecap="round" />
<polyline points="1801.0,854.3 1935.7,854.3 1927.6,872.5 1944.0,872.0" fill="none" stroke="#acacac" stroke-width="1.1" stroke-linejoin="round" stroke-linecap="round" />
<polyline points="1818.6,979.8 1904.0,979.8" fill="none" stroke="#acacac" stroke-width="1.1" stroke-linejoin="round" stroke-linecap="round" />
<polyline points="1443.6,1015.0 1551.0,1015.0" fill="none" stroke="#acacac" stroke-width="1.1" stroke-linejoin="round" stroke-linecap="round" />
<polyline points="1898.8,571.3 1901.5,580.8 1912.0,600.0 1917.0,622.0 1920.0,640.0 1905.0,665.0 1905.5,691.9 1894.0,707.2 1895.9,726.4 1917.0,751.4 1920.9,763.0 1934.3,766.8 1926.6,787.9 1949.7,809.0 1957.3,832.0 1963.0,837.8 1955.4,855.0 1947.7,874.3 1936.2,895.4 1919.0,928.0 1912.0,939.0 1904.0,982.0 1910.0,1007.0 1890.6,1050.5 1946.6,1050.5 1944.0,1060.0 1950.7,1070.0" fill="none" stroke="#acacac" stroke-width="1.1" stroke-linejoin="round" stroke-linecap="round" />
<polyline points="1871.6,446.3 1869.0,470.8 1852.6,489.8 1855.3,519.7 1877.0,544.0 1898.8,571.3" fill="none" stroke="#acacac" stroke-width="1.1" stroke-linejoin="round" stroke-linecap="round" />
<polyline points="1193.5,433.7 1202.8,444.8 1213.8,448.5 1210.0,467.0 1212.0,483.5 1208.3,494.6 1215.7,498.3 1225.0,489.0 1232.3,494.6 1241.5,522.3 1250.0,527.8 1257.5,544.0 1279.0,538.7 1301.0,530.5 1312.4,518.3" fill="none" stroke="#acacac" stroke-width="1.1" stroke-linejoin="round" stroke-linecap="round" />
<polyline points="1925.5,452.7 1933.6,460.9 1971.0,473.9 1993.7,478.7 2003.5,491.7 2001.8,501.5" fill="none" stroke="#acacac" stroke-width="1.1" stroke-linejoin="round" stroke-linecap="round" />
<polyline points="1917.0,622.0 2003.6,622.0" fill="none" stroke="#acacac" stroke-width="1.1" stroke-linejoin="round" stroke-linecap="round" />
<polyline points="2011.3,650.0 2011.3,802.8 1998.0,824.4 1999.6,789.8 1993.8,812.8 1984.2,818.6 1982.3,830.0 1963.0,832.0" fill="none" stroke="#acacac" stroke-width="1.1" stroke-linejoin="round" stroke-linecap="round" />
<polyline points="2011.3,802.8 2030.0,800.0 2052.0,792.0 2092.4,759.6 2154.4,770.4 2176.0,749.0 2219.0,711.0" fill="none" stroke="#acacac" stroke-width="1.1" stroke-linejoin="round" stroke-linecap="round" />
<polyline points="2011.3,651.8 2091.8,651.8 2134.0,647.0" fill="none" stroke="#acacac" stroke-width="1.1" stroke-linejoin="round" stroke-linecap="round" />
<polyline points="2092.4,652.0 2092.4,759.6" fill="none" stroke="#acacac" stroke-width="1.1" stroke-linejoin="round" stroke-linecap="round" />
<polyline points="2219.4,642.0 2219.4,731.7 2364.0,731.7" fill="none" stroke="#acacac" stroke-width="1.1" stroke-linejoin="round" stroke-linecap="round" />
<polyline points="2242.0,630.0 2242.0,642.4 2373.7,642.4 2380.0,647.2 2390.0,665.0 2417.6,683.0" fill="none" stroke="#acacac" stroke-width="1.1" stroke-linejoin="round" stroke-linecap="round" />
<polyline points="2378.6,696.0 2386.7,709.0 2384.0,720.0 2364.0,730.0 2360.0,745.0" fill="none" stroke="#acacac" stroke-width="1.1" stroke-linejoin="round" stroke-linecap="round" />
<polyline points="2284.0,731.7 2262.0,745.0 2240.0,770.0 2226.5,811.0 2185.7,825.0 2175.0,817.0 2155.8,790.0 2176.0,749.0" fill="none" stroke="#acacac" stroke-width="1.1" stroke-linejoin="round" stroke-linecap="round" />
<polyline points="2175.0,817.0 2142.3,841.2 2126.0,849.4" fill="none" stroke="#acacac" stroke-width="1.1" stroke-linejoin="round" stroke-linecap="round" />
<polyline points="1954.8,853.0 2126.0,853.0 2126.0,850.7 2359.6,850.7" fill="none" stroke="#acacac" stroke-width="1.1" stroke-linejoin="round" stroke-linecap="round" />
<polyline points="2185.7,850.7 2180.0,860.0 2150.4,876.5 2120.5,890.0 2107.0,909.0" fill="none" stroke="#acacac" stroke-width="1.1" stroke-linejoin="round" stroke-linecap="round" />
<polyline points="1930.3,909.0 2142.3,909.0 2164.0,901.5 2204.8,903.2 2213.0,914.6 2245.5,916.0 2279.5,950.0" fill="none" stroke="#acacac" stroke-width="1.1" stroke-linejoin="round" stroke-linecap="round" />
<polyline points="2136.8,917.3 2150.4,928.2 2174.9,963.5 2191.0,979.8 2199.3,1004.3 2208.8,1015.0" fill="none" stroke="#acacac" stroke-width="1.1" stroke-linejoin="round" stroke-linecap="round" />
<polyline points="2069.0,909.0 2088.0,1004.3 2085.0,1047.7 2089.3,1060.0 2169.4,1065.4 2175.0,1058.6 2191.0,1060.0" fill="none" stroke="#acacac" stroke-width="1.1" stroke-linejoin="round" stroke-linecap="round" />
<polyline points="2009.0,1051.8 2085.0,1050.5" fill="none" stroke="#acacac" stroke-width="1.1" stroke-linejoin="round" stroke-linecap="round" />
<polyline points="1994.0,910.5 1983.3,1020.6 1986.0,1072.0" fill="none" stroke="#acacac" stroke-width="1.1" stroke-linejoin="round" stroke-linecap="round" />
<polyline points="2598.5,434.0 2598.5,481.6 2596.0,487.0 2607.0,495.0 2608.0,506.0 2612.6,511.5 2626.0,529.2" fill="none" stroke="#acacac" stroke-width="1.1" stroke-linejoin="round" stroke-linecap="round" />
<polyline points="2499.3,518.0 2504.4,587.2 2509.5,592.3" fill="none" stroke="#acacac" stroke-width="1.1" stroke-linejoin="round" stroke-linecap="round" />
<polyline points="2487.0,518.3 2485.8,540.0 2471.0,556.2 2461.4,580.6 2456.6,611.5" fill="none" stroke="#acacac" stroke-width="1.1" stroke-linejoin="round" stroke-linecap="round" />
<polyline points="2430.0,518.3 2429.0,572.5 2433.8,611.5 2429.0,639.0 2427.3,673.2 2422.4,683.0" fill="none" stroke="#acacac" stroke-width="1.1" stroke-linejoin="round" stroke-linecap="round" />
<polyline points="2433.8,611.5 2494.0,612.3 2508.6,606.6" fill="none" stroke="#acacac" stroke-width="1.1" stroke-linejoin="round" stroke-linecap="round" />
<polyline points="2429.0,640.0 2479.3,640.0 2479.3,666.7" fill="none" stroke="#acacac" stroke-width="1.1" stroke-linejoin="round" stroke-linecap="round" />
<polyline points="2253.7,434.0 2267.0,454.5 2321.6,479.0 2384.0,492.5 2403.0,506.0 2386.8,518.3" fill="none" stroke="#acacac" stroke-width="1.1" stroke-linejoin="round" stroke-linecap="round" />
<polyline points="2082.9,433.6 2090.7,438.3 2093.3,449.1 2101.0,456.9 2104.1,454.3 2108.3,455.3 2110.8,453.3 2112.9,454.8 2112.4,461.0 2114.0,468.8 2118.1,474.0 2121.7,471.4 2126.9,471.4 2133.1,476.5 2128.4,484.3 2152.7,500.0 2158.6,503.4 2172.0,538.7 2172.2,577.4 2157.6,619.6 2143.0,631.0 2143.0,644.0 2162.5,653.7 2227.5,627.7 2266.5,606.6 2263.2,583.9 2273.0,575.7 2328.2,575.0 2341.2,556.2 2360.0,535.0 2386.8,518.3 2487.0,518.3 2489.0,507.0 2509.5,500.6 2521.0,480.0 2539.0,435.0" fill="none" stroke="#f3f3f3" stroke-width="8" stroke-linejoin="round" stroke-linecap="round" />
<polyline points="1132.0,996.6 1203.5,990.4 1201.5,997.5 1311.5,1038.8 1397.4,1039.0 1397.4,1023.3 1444.6,1023.5 1444.6,1016.0 1444.6,1023.5 1455.8,1034.7 1462.0,1037.0 1474.4,1049.6 1485.6,1058.3 1491.8,1062.0 1496.8,1070.7 1501.7,1081.9 1505.5,1095.5 1511.7,1101.7 1516.6,1105.5 1529.0,1111.7 1541.5,1119.0 1546.5,1119.8 1555.0,1110.4 1559.0,1098.0 1562.6,1093.0 1571.3,1090.0 1598.6,1093.0 1603.6,1099.3 1616.0,1110.4 1621.0,1116.6 1623.5,1126.0" fill="none" stroke="#f3f3f3" stroke-width="8" stroke-linejoin="round" stroke-linecap="round" />
<polyline points="2082.9,433.6 2090.7,438.3 2093.3,449.1 2101.0,456.9 2104.1,454.3 2108.3,455.3 2110.8,453.3 2112.9,454.8 2112.4,461.0 2114.0,468.8 2118.1,474.0 2121.7,471.4 2126.9,471.4 2133.1,476.5 2128.4,484.3 2152.7,500.0 2158.6,503.4 2172.0,538.7 2172.2,577.4 2157.6,619.6 2143.0,631.0 2143.0,644.0 2162.5,653.7 2227.5,627.7 2266.5,606.6 2263.2,583.9 2273.0,575.7 2328.2,575.0 2341.2,556.2 2360.0,535.0 2386.8,518.3 2487.0,518.3 2489.0,507.0 2509.5,500.6 2521.0,480.0 2539.0,435.0" fill="none" stroke="#9a9a9a" stroke-width="2" stroke-linejoin="round" stroke-linecap="round" />
<polyline points="1132.0,996.6 1203.5,990.4 1201.5,997.5 1311.5,1038.8 1397.4,1039.0 1397.4,1023.3 1444.6,1023.5 1444.6,1016.0 1444.6,1023.5 1455.8,1034.7 1462.0,1037.0 1474.4,1049.6 1485.6,1058.3 1491.8,1062.0 1496.8,1070.7 1501.7,1081.9 1505.5,1095.5 1511.7,1101.7 1516.6,1105.5 1529.0,1111.7 1541.5,1119.0 1546.5,1119.8 1555.0,1110.4 1559.0,1098.0 1562.6,1093.0 1571.3,1090.0 1598.6,1093.0 1603.6,1099.3 1616.0,1110.4 1621.0,1116.6 1623.5,1126.0" fill="none" stroke="#9a9a9a" stroke-width="2" stroke-linejoin="round" stroke-linecap="round" />
<text x="1031.7" y="561.8" font-size="19" fill="#a0a0a0" text-anchor="middle" letter-spacing="0.6" stroke="#eeeeee" stroke-width="2.5" paint-order="stroke">Oregon</text>
<text x="1209.4" y="558.8" font-size="19" fill="#a0a0a0" text-anchor="middle" letter-spacing="0.6" stroke="#eeeeee" stroke-width="2.5" paint-order="stroke">Idaho</text>
<text x="1418.4" y="602.5" font-size="19" fill="#a0a0a0" text-anchor="middle" letter-spacing="0.6" stroke="#eeeeee" stroke-width="2.5" paint-order="stroke">Wyoming</text>
<text x="1633.8" y="529.2" font-size="19" fill="#a0a0a0" text-anchor="middle" letter-spacing="0.6" stroke="#eeeeee" stroke-width="2.5" paint-order="stroke">South</text>
<text x="1633.8" y="552.3" font-size="19" fill="#a0a0a0" text-anchor="middle" letter-spacing="0.6" stroke="#eeeeee" stroke-width="2.5" paint-order="stroke">Dakota</text>
<text x="1811.8" y="466.7" font-size="19" fill="#a0a0a0" text-anchor="middle" letter-spacing="0.6" stroke="#eeeeee" stroke-width="2.5" paint-order="stroke">Minnesota</text>
<text x="1835.0" y="643.3" font-size="19" fill="#a0a0a0" text-anchor="middle" letter-spacing="0.6" stroke="#eeeeee" stroke-width="2.5" paint-order="stroke">Iowa</text>
<text x="1143.0" y="750.6" font-size="19" fill="#a0a0a0" text-anchor="middle" letter-spacing="0.6" stroke="#eeeeee" stroke-width="2.5" paint-order="stroke">Nevada</text>
<text x="1054.8" y="826.3" font-size="19" fill="#a0a0a0" text-anchor="middle" letter-spacing="0.6" stroke="#eeeeee" stroke-width="2.5" paint-order="stroke">California</text>
<text x="1479.0" y="760.2" font-size="19" fill="#a0a0a0" text-anchor="middle" letter-spacing="0.6" stroke="#eeeeee" stroke-width="2.5" paint-order="stroke">Colorado</text>
<text x="1686.8" y="778.7" font-size="19" fill="#a0a0a0" text-anchor="middle" letter-spacing="0.6" stroke="#eeeeee" stroke-width="2.5" paint-order="stroke">Kansas</text>
<text x="1863.5" y="788.2" font-size="19" fill="#a0a0a0" text-anchor="middle" letter-spacing="0.6" stroke="#eeeeee" stroke-width="2.5" paint-order="stroke">Missouri</text>
<text x="1299.6" y="928.2" font-size="19" fill="#a0a0a0" text-anchor="middle" letter-spacing="0.6" stroke="#eeeeee" stroke-width="2.5" paint-order="stroke">Arizona</text>
<text x="1462.6" y="928.2" font-size="19" fill="#a0a0a0" text-anchor="middle" letter-spacing="0.6" stroke="#eeeeee" stroke-width="2.5" paint-order="stroke">New Mexico</text>
<text x="1715.4" y="891.5" font-size="19" fill="#a0a0a0" text-anchor="middle" letter-spacing="0.6" stroke="#eeeeee" stroke-width="2.5" paint-order="stroke">Oklahoma</text>
<text x="1863.5" y="918.7" font-size="19" fill="#a0a0a0" text-anchor="middle" letter-spacing="0.6" stroke="#eeeeee" stroke-width="2.5" paint-order="stroke">Arkansas</text>
<text x="1663.7" y="1043.7" font-size="19" fill="#a0a0a0" text-anchor="middle" letter-spacing="0.6" stroke="#eeeeee" stroke-width="2.5" paint-order="stroke">Texas</text>
<text x="1324.0" y="1108.9" font-size="19" fill="#a0a0a0" text-anchor="middle" letter-spacing="0.6" stroke="#eeeeee" stroke-width="2.5" paint-order="stroke">Sonora</text>
<text x="1195.0" y="1073.6" font-size="19" fill="#a0a0a0" text-anchor="middle" letter-spacing="0.6" stroke="#eeeeee" stroke-width="2.5" paint-order="stroke">Baja</text>
<text x="1195.0" y="1096.7" font-size="19" fill="#a0a0a0" text-anchor="middle" letter-spacing="0.6" stroke="#eeeeee" stroke-width="2.5" paint-order="stroke">California</text>
<text x="1871.6" y="1061.9" font-size="19" fill="#a0a0a0" text-anchor="middle" letter-spacing="0.6" stroke="#eeeeee" stroke-width="2.5" paint-order="stroke">Louisiana</text>
<text x="1943.0" y="963.5" font-size="19" fill="#a0a0a0" text-anchor="middle" letter-spacing="0.6" stroke="#eeeeee" stroke-width="2.5" paint-order="stroke">Mississippi</text>
<text x="2049.9" y="882.0" font-size="19" fill="#a0a0a0" text-anchor="middle" letter-spacing="0.6" stroke="#eeeeee" stroke-width="2.5" paint-order="stroke">Tennessee</text>
<text x="2090.6" y="805.9" font-size="19" fill="#a0a0a0" text-anchor="middle" letter-spacing="0.6" stroke="#eeeeee" stroke-width="2.5" paint-order="stroke">Kentucky</text>
<text x="2132.8" y="1011.0" font-size="19" fill="#a0a0a0" text-anchor="middle" letter-spacing="0.6" stroke="#eeeeee" stroke-width="2.5" paint-order="stroke">Georgia</text>
<text x="2236.0" y="879.3" font-size="19" fill="#a0a0a0" text-anchor="middle" letter-spacing="0.6" stroke="#eeeeee" stroke-width="2.5" paint-order="stroke">North</text>
<text x="2236.0" y="902.4" font-size="19" fill="#a0a0a0" text-anchor="middle" letter-spacing="0.6" stroke="#eeeeee" stroke-width="2.5" paint-order="stroke">Carolina</text>
<text x="2214.3" y="786.3" font-size="19" fill="#a0a0a0" text-anchor="middle" letter-spacing="0.6" stroke="#eeeeee" stroke-width="2.5" paint-order="stroke">Virginia</text>
<text x="1960.2" y="720.8" font-size="19" fill="#a0a0a0" text-anchor="middle" letter-spacing="0.6" stroke="#eeeeee" stroke-width="2.5" paint-order="stroke">Illinois</text>
<text x="2052.0" y="720.8" font-size="19" fill="#a0a0a0" text-anchor="middle" letter-spacing="0.6" stroke="#eeeeee" stroke-width="2.5" paint-order="stroke">Indiana</text>
<text x="2146.0" y="711.4" font-size="19" fill="#a0a0a0" text-anchor="middle" letter-spacing="0.6" stroke="#eeeeee" stroke-width="2.5" paint-order="stroke">Ohio</text>
<text x="1940.0" y="540.5" font-size="19" fill="#a0a0a0" text-anchor="middle" letter-spacing="0.6" stroke="#eeeeee" stroke-width="2.5" paint-order="stroke">Wisconsin</text>
<text x="2098.5" y="598.2" font-size="19" fill="#a0a0a0" text-anchor="middle" letter-spacing="0.6" stroke="#eeeeee" stroke-width="2.5" paint-order="stroke">Michigan</text>
<text x="2369.6" y="602.2" font-size="19" fill="#a0a0a0" text-anchor="middle" letter-spacing="0.6" stroke="#eeeeee" stroke-width="2.5" paint-order="stroke">New York</text>
<text x="2302.0" y="687.0" font-size="19" fill="#a0a0a0" text-anchor="middle" letter-spacing="0.6" stroke="#eeeeee" stroke-width="2.5" paint-order="stroke">Pennsylvania</text>
<text x="2450.0" y="554.6" font-size="19" fill="#a0a0a0" text-anchor="middle" letter-spacing="0.6" stroke="#eeeeee" stroke-width="2.5" paint-order="stroke">VT</text>
<text x="2487.4" y="575.0" font-size="19" fill="#a0a0a0" text-anchor="middle" letter-spacing="0.6" stroke="#eeeeee" stroke-width="2.5" paint-order="stroke">NH</text>
<text x="2468.0" y="627.7" font-size="19" fill="#a0a0a0" text-anchor="middle" letter-spacing="0.6" stroke="#eeeeee" stroke-width="2.5" paint-order="stroke">MA</text>
<text x="2451.7" y="657.8" font-size="19" fill="#a0a0a0" text-anchor="middle" letter-spacing="0.6" stroke="#eeeeee" stroke-width="2.5" paint-order="stroke">CT</text>
<text x="2399.0" y="715.5" font-size="19" fill="#a0a0a0" text-anchor="middle" letter-spacing="0.6" stroke="#eeeeee" stroke-width="2.5" paint-order="stroke">NJ</text>
<text x="2325.0" y="743.0" font-size="19" fill="#a0a0a0" text-anchor="middle" letter-spacing="0.6" stroke="#eeeeee" stroke-width="2.5" paint-order="stroke">MD</text>
<text x="2372.0" y="767.7" font-size="19" fill="#a0a0a0" text-anchor="middle" letter-spacing="0.6" stroke="#eeeeee" stroke-width="2.5" paint-order="stroke">DE</text>
<text x="2555.3" y="498.0" font-size="19" fill="#a0a0a0" text-anchor="middle" letter-spacing="0.6" stroke="#eeeeee" stroke-width="2.5" paint-order="stroke">Maine</text>
<text x="2639.0" y="441.0" font-size="19" fill="#a0a0a0" text-anchor="middle" letter-spacing="0.6" stroke="#eeeeee" stroke-width="2.5" paint-order="stroke">New</text>
<text x="2639.0" y="464.0" font-size="19" fill="#a0a0a0" text-anchor="middle" letter-spacing="0.6" stroke="#eeeeee" stroke-width="2.5" paint-order="stroke">Brunswick</text>
<text x="2723.5" y="519.7" font-size="19" fill="#a0a0a0" text-anchor="middle" letter-spacing="0.6" stroke="#eeeeee" stroke-width="2.5" paint-order="stroke">Nova Scotia</text>
<text x="1676.0" y="701.7" font-size="29" fill="#8a8a8a" text-anchor="middle" letter-spacing="0.5" stroke="#f4f4f4" stroke-width="3" paint-order="stroke">United</text>
<text x="1676.0" y="735.7" font-size="29" fill="#8a8a8a" text-anchor="middle" letter-spacing="0.5" stroke="#f4f4f4" stroke-width="3" paint-order="stroke">States</text>
</g>
<g clip-path="url(#mapclip)">
<rect x="1981" y="502.8" width="89.80000000000018" height="45.99999999999994" fill="#f1f1f1" />
<rect x="1781.4" y="545.5" width="106.0" height="46.700000000000045" fill="#f1f1f1" />
<rect x="1226" y="714" width="124.70000000000005" height="46" fill="#f1f1f1" />
<rect x="1477" y="775" width="91.59999999999991" height="45.799999999999955" fill="#f1f1f1" />
<rect x="1877" y="645" width="84.40000000000009" height="46.5" fill="#f1f1f1" />
<rect x="2029.5" y="701.7" width="106.0" height="45.69999999999993" fill="#f1f1f1" />
<rect x="2189.8" y="726.2" width="93.19999999999982" height="46.19999999999993" fill="#f1f1f1" />
<rect x="2267.3" y="648.9" width="122.29999999999973" height="46.30000000000007" fill="#f1f1f1" />
<rect x="2284" y="768.8" width="113.30000000000018" height="44.80000000000007" fill="#f1f1f1" />
<rect x="2456" y="678.6" width="97" height="47.0" fill="#f1f1f1" />
<rect x="1817" y="1075" width="130" height="50" fill="#f1f1f1" />
<circle cx="2024.9" cy="479.7" r="19.5" fill="#f4f4f4" fill-opacity="0.75"/>
<circle cx="2024.9" cy="479.7" r="17.8" fill="#3d8a4d"/>
<circle cx="1834.3" cy="519.5" r="19.5" fill="#f4f4f4" fill-opacity="0.75"/>
<circle cx="1834.3" cy="519.5" r="17.8" fill="#3b884b"/>
<circle cx="1287" cy="692" r="19.5" fill="#f4f4f4" fill-opacity="0.75"/>
<circle cx="1287" cy="692" r="17.8" fill="#2c6e3f"/>
<circle cx="1522" cy="754" r="19.5" fill="#f4f4f4" fill-opacity="0.75"/>
<circle cx="1522" cy="754" r="17.8" fill="#3a8049"/>
<circle cx="1918" cy="622.6" r="19.5" fill="#f4f4f4" fill-opacity="0.75"/>
<circle cx="1918" cy="622.6" r="17.8" fill="#2c6f40"/>
<circle cx="1998" cy="601.5" r="19.5" fill="#f4f4f4" fill-opacity="0.75"/>
<circle cx="1998" cy="601.5" r="17.8" fill="#2a6a3d"/>
<circle cx="2008.6" cy="647.5" r="19.5" fill="#f4f4f4" fill-opacity="0.75"/>
<circle cx="2008.6" cy="647.5" r="17.8" fill="#307544"/>
<circle cx="2082" cy="679.3" r="19.5" fill="#f4f4f4" fill-opacity="0.75"/>
<circle cx="2082" cy="679.3" r="17.8" fill="#2c6e40"/>
<circle cx="2235.6" cy="704.4" r="19.5" fill="#f4f4f4" fill-opacity="0.75"/>
<circle cx="2235.6" cy="704.4" r="17.8" fill="#2d7041"/>
<circle cx="2328.2" cy="627.7" r="19.5" fill="#f4f4f4" fill-opacity="0.75"/>
<circle cx="2328.2" cy="627.7" r="17.8" fill="#2e7041"/>
<circle cx="2341" cy="745" r="19.5" fill="#f4f4f4" fill-opacity="0.75"/>
<circle cx="2341" cy="745" r="17.8" fill="#2a6a3d"/>
<circle cx="2503.7" cy="657.3" r="19.5" fill="#f4f4f4" fill-opacity="0.75"/>
<circle cx="2503.7" cy="657.3" r="17.8" fill="#4f9a5a"/>
<circle cx="1881" cy="1076.3" r="19.5" fill="#f4f4f4" fill-opacity="0.75"/>
<circle cx="1881" cy="1076.3" r="17.8" fill="#2b6c3e"/>
<ellipse cx="1834.5" cy="516" rx="17.5" ry="19" fill="#3b884b"/>
<text x="2025.9" y="520.0" font-size="19" fill="#000000" text-anchor="middle" >Brampton</text>
<text x="2025.9" y="543.0" font-size="19" fill="#000000" text-anchor="middle" >8.36</text>
<text x="1834.4" y="562.7" font-size="19" fill="#000000" text-anchor="middle" >Minnetonka</text>
<text x="1834.4" y="585.7" font-size="19" fill="#000000" text-anchor="middle" >8.69</text>
<text x="1288.3" y="731.2" font-size="19" fill="#000000" text-anchor="middle" >Salt Lake City</text>
<text x="1288.3" y="754.2" font-size="19" fill="#000000" text-anchor="middle" >4.08</text>
<text x="1522.8" y="792.2" font-size="19" fill="#000000" text-anchor="middle" >Matheson</text>
<text x="1522.8" y="815.2" font-size="19" fill="#000000" text-anchor="middle" >7.35</text>
<text x="1919.2" y="662.2" font-size="19" fill="#000000" text-anchor="middle" >Dubuque</text>
<text x="1919.2" y="685.2" font-size="19" fill="#000000" text-anchor="middle" >2.18</text>
<text x="2082.5" y="718.9" font-size="19" fill="#000000" text-anchor="middle" >Fort Wayne</text>
<text x="2082.5" y="741.9" font-size="19" fill="#000000" text-anchor="middle" >2.16</text>
<text x="2236.4" y="743.4" font-size="19" fill="#000000" text-anchor="middle" >Pittsburgh</text>
<text x="2236.4" y="766.4" font-size="19" fill="#000000" text-anchor="middle" >2.05</text>
<text x="2328.4" y="666.1" font-size="19" fill="#000000" text-anchor="middle" >Watkins Glen</text>
<text x="2328.4" y="689.1" font-size="19" fill="#000000" text-anchor="middle" >3.23</text>
<text x="2340.7" y="786.0" font-size="19" fill="#000000" text-anchor="middle" >White Marsh</text>
<text x="2340.7" y="809.0" font-size="19" fill="#000000" text-anchor="middle" >1.13</text>
<text x="2504.5" y="695.8" font-size="19" fill="#000000" text-anchor="middle" >Dartmouth</text>
<text x="2504.5" y="718.8" font-size="19" fill="#000000" text-anchor="middle" >12.67</text>
<text x="1882.0" y="1092.2" font-size="19" fill="#000000" text-anchor="middle" >Breaux Bridge</text>
<text x="1882.0" y="1115.2" font-size="19" fill="#000000" text-anchor="middle" >1.69</text>
<rect x="518" y="1096.6" width="335.70000000000005" height="25.0" fill="#e9eeee" fill-opacity="0.85"/>
<text x="521.0" y="1115.7" font-size="20.5" fill="#7a7a7a" text-anchor="start" letter-spacing="0.1" >© 2020 Mapbox  © OpenStreetMap</text>
</g>
<rect x="515" y="433" width="2762" height="692" fill="none" stroke="#000" stroke-width="2"/>
<rect x="514" y="1179.6" width="1372" height="2.0" fill="#bdbdbd" />
<line x1="731.5" y1="1181" x2="731.5" y2="1654" stroke="#b6b6b6" stroke-width="2" />
<line x1="1308.5" y1="1181" x2="1308.5" y2="1654" stroke="#b6b6b6" stroke-width="2" />
<line x1="1885.5" y1="1181" x2="1885.5" y2="1654" stroke="#b6b6b6" stroke-width="2" />
<line x1="514" y1="1577" x2="1886" y2="1577" stroke="#b6b6b6" stroke-width="2" />
<rect x="731.7" y="1185.5" width="476.68525999999997" height="26.5" fill="#9b918e" />
<text x="721.5" y="1203.0" font-size="19.3" fill="#111111" text-anchor="end" >NetWeaver Portal</text>
<text x="1216.9" y="1205.0" font-size="19.3" fill="#111111" text-anchor="start" >145.29</text>
<rect x="731.7" y="1221.5" width="50.57341999999994" height="26.5" fill="#9b918e" />
<text x="721.5" y="1239.0" font-size="19.3" fill="#111111" text-anchor="end" >BW (Retail)</text>
<text x="790.8" y="1241.0" font-size="19.3" fill="#111111" text-anchor="start" >15.93</text>
<rect x="731.7" y="1257.5" width="14.306479999999965" height="26.5" fill="#9b918e" />
<text x="721.5" y="1275.0" font-size="19.3" fill="#111111" text-anchor="end" >SAPCRM7 (Utilities)</text>
<text x="754.5" y="1277.0" font-size="19.3" fill="#111111" text-anchor="start" >4.92</text>
<rect x="731.7" y="1293.5" width="11.803039999999896" height="26.5" fill="#9b918e" />
<text x="721.5" y="1311.0" font-size="19.3" fill="#111111" text-anchor="end" >UAT 2 (Retail)</text>
<text x="752.0" y="1313.0" font-size="19.3" fill="#111111" text-anchor="start" >4.16</text>
<rect x="731.7" y="1329.5" width="9.036079999999856" height="26.5" fill="#9b918e" />
<text x="721.5" y="1347.0" font-size="19.3" fill="#111111" text-anchor="end" >UAT 1</text>
<text x="749.2" y="1349.0" font-size="19.3" fill="#111111" text-anchor="start" >3.32</text>
<rect x="731.7" y="1365.5" width="7.553779999999961" height="26.5" fill="#9b918e" />
<text x="721.5" y="1383.0" font-size="19.3" fill="#111111" text-anchor="end" >PROD 2 (Retail)</text>
<text x="747.8" y="1385.0" font-size="19.3" fill="#111111" text-anchor="start" >2.87</text>
<rect x="731.7" y="1401.5" width="7.3561399999998685" height="26.5" fill="#9b918e" />
<text x="721.5" y="1419.0" font-size="19.3" fill="#111111" text-anchor="end" >WebGUI</text>
<text x="747.6" y="1421.0" font-size="19.3" fill="#111111" text-anchor="start" >2.81</text>
<rect x="731.7" y="1437.5" width="5.511499999999955" height="26.5" fill="#9b918e" />
<text x="721.5" y="1455.0" font-size="19.3" fill="#111111" text-anchor="end" >UAT 2</text>
<text x="745.7" y="1457.0" font-size="19.3" fill="#111111" text-anchor="start" >2.25</text>
<rect x="731.7" y="1473.5" width="4.852699999999913" height="26.5" fill="#9b918e" />
<text x="721.5" y="1491.0" font-size="19.3" fill="#111111" text-anchor="end" >PROD 1 (ERP)</text>
<text x="745.1" y="1493.0" font-size="19.3" fill="#111111" text-anchor="start" >2.05</text>
<rect x="731.7" y="1509.5" width="3.6339199999998755" height="26.5" fill="#9b918e" />
<text x="721.5" y="1527.0" font-size="19.3" fill="#111111" text-anchor="end" >PROD 2 (ERP)</text>
<text x="743.8" y="1529.0" font-size="19.3" fill="#111111" text-anchor="start" >1.68</text>
<rect x="731.7" y="1545.5" width="2.6127799999999297" height="26.5" fill="#9b918e" />
<text x="721.5" y="1563.0" font-size="19.3" fill="#111111" text-anchor="end" >DEV 1</text>
<text x="742.8" y="1565.0" font-size="19.3" fill="#111111" text-anchor="start" >1.37</text>
<text x="733.5" y="1607.0" font-size="19" fill="#111111" text-anchor="start" >0.00</text>
<line x1="895.5" y1="1577" x2="895.5" y2="1585" stroke="#b6b6b6" stroke-width="1.5" />
<text x="895.5" y="1607.0" font-size="19" fill="#111111" text-anchor="middle" >50.00</text>
<line x1="1059.5" y1="1577" x2="1059.5" y2="1585" stroke="#b6b6b6" stroke-width="1.5" />
<text x="1059.5" y="1607.0" font-size="19" fill="#111111" text-anchor="middle" >100.00</text>
<line x1="1223.5" y1="1577" x2="1223.5" y2="1585" stroke="#b6b6b6" stroke-width="1.5" />
<text x="1223.5" y="1607.0" font-size="19" fill="#111111" text-anchor="middle" >150.00</text>
<text x="1015.0" y="1643.0" font-size="18" fill="#555555" text-anchor="middle" >RESPONSE TIME (S)</text>
<rect x="1121" y="1623" width="20" height="3" fill="#666666" />
<rect x="1121" y="1631" width="15" height="3" fill="#666666" />
<rect x="1121" y="1639" width="8" height="3" fill="#666666" />
<polygon points="1308.5,1198.7 1327.0,1198.7 1311.0,1234.4 1358.8,1271.0 1327.0,1306.3 1321.2,1343.0 1857.0,1379.5 1312.0,1416.2 1308.5,1452.0 1593.6,1487.0 1361.5,1523.8 1323.5,1560.4 1308.5,1560.4" fill="#d8d2d0" stroke="#c9bfbd" stroke-width="1.2"/>
<text x="1310.0" y="1607.0" font-size="19" fill="#111111" text-anchor="start" >0K</text>
<line x1="1420.3" y1="1577" x2="1420.3" y2="1585" stroke="#b6b6b6" stroke-width="1.5" />
<text x="1420.3" y="1607.0" font-size="19" fill="#111111" text-anchor="middle" >200K</text>
<line x1="1532.1" y1="1577" x2="1532.1" y2="1585" stroke="#b6b6b6" stroke-width="1.5" />
<text x="1532.1" y="1607.0" font-size="19" fill="#111111" text-anchor="middle" >400K</text>
<line x1="1643.9" y1="1577" x2="1643.9" y2="1585" stroke="#b6b6b6" stroke-width="1.5" />
<text x="1643.9" y="1607.0" font-size="19" fill="#111111" text-anchor="middle" >600K</text>
<line x1="1755.7" y1="1577" x2="1755.7" y2="1585" stroke="#b6b6b6" stroke-width="1.5" />
<text x="1755.7" y="1607.0" font-size="19" fill="#111111" text-anchor="middle" >800K</text>
<line x1="1867.5" y1="1577" x2="1867.5" y2="1585" stroke="#b6b6b6" stroke-width="1.5" />
<text x="1883.0" y="1607.0" font-size="19" fill="#111111" text-anchor="end" >1000K</text>
<text x="1590.5" y="1643.0" font-size="18" fill="#555555" text-anchor="middle" >OPERATION COUNT</text>
<line x1="2006.7" y1="1180" x2="2006.7" y2="1750" stroke="#b6b6b6" stroke-width="2" />
<line x1="2181.6" y1="1180" x2="2181.6" y2="1750" stroke="#b6b6b6" stroke-width="2" />
<line x1="2592.6" y1="1180" x2="2592.6" y2="1750" stroke="#b6b6b6" stroke-width="2" />
<line x1="3001.2" y1="1180" x2="3001.2" y2="1750" stroke="#b6b6b6" stroke-width="2" />
<line x1="3175.2" y1="1180" x2="3175.2" y2="1750" stroke="#b6b6b6" stroke-width="2" />
<line x1="1904" y1="1217" x2="3277" y2="1217" stroke="#b6b6b6" stroke-width="2" />
<text x="2091.5" y="1203.0" font-size="19" fill="#111111" text-anchor="middle" >4/8/2018</text>
<text x="2387.0" y="1203.0" font-size="19" fill="#111111" text-anchor="middle" >4/15/2018</text>
<text x="2795.0" y="1203.0" font-size="19" fill="#111111" text-anchor="middle" >4/22/2018</text>
<text x="3088.0" y="1203.0" font-size="19" fill="#111111" text-anchor="middle" >4/29/2018</text>
<line x1="1996" y1="1748.3" x2="2006" y2="1748.3" stroke="#b6b6b6" stroke-width="1.5" />
<text x="1994.4" y="1743.0" font-size="19.3" fill="#111111" text-anchor="end" >0.00</text>
<line x1="1996" y1="1620.7" x2="2006" y2="1620.7" stroke="#b6b6b6" stroke-width="1.5" />
<text x="1994.4" y="1625.7" font-size="19.3" fill="#111111" text-anchor="end" >2.00</text>
<line x1="1996" y1="1493.1" x2="2006" y2="1493.1" stroke="#b6b6b6" stroke-width="1.5" />
<text x="1994.4" y="1498.1" font-size="19.3" fill="#111111" text-anchor="end" >4.00</text>
<line x1="1996" y1="1365.5" x2="2006" y2="1365.5" stroke="#b6b6b6" stroke-width="1.5" />
<text x="1994.4" y="1370.5" font-size="19.3" fill="#111111" text-anchor="end" >6.00</text>
<line x1="1996" y1="1237.9" x2="2006" y2="1237.9" stroke="#b6b6b6" stroke-width="1.5" />
<text x="1994.4" y="1242.9" font-size="19.3" fill="#111111" text-anchor="end" >8.00</text>
<text x="1926.6" y="1482.5" font-size="18" fill="#555555" text-anchor="middle" transform="rotate(-90 1926.6 1482.5)" dy="6">RESPONSE TIME (S)</text>
<line x1="3175" y1="1748.5" x2="3183" y2="1748.5" stroke="#b6b6b6" stroke-width="1.5" />
<text x="3190.3" y="1743.0" font-size="19.3" fill="#111111" text-anchor="start" >0K</text>
<line x1="3175" y1="1593.0" x2="3183" y2="1593.0" stroke="#b6b6b6" stroke-width="1.5" />
<text x="3190.3" y="1598.5" font-size="19.3" fill="#111111" text-anchor="start" >50K</text>
<line x1="3175" y1="1437.5" x2="3183" y2="1437.5" stroke="#b6b6b6" stroke-width="1.5" />
<text x="3190.3" y="1443.0" font-size="19.3" fill="#111111" text-anchor="start" >100K</text>
<line x1="3175" y1="1282.0" x2="3183" y2="1282.0" stroke="#b6b6b6" stroke-width="1.5" />
<text x="3190.3" y="1287.5" font-size="19.3" fill="#111111" text-anchor="start" >150K</text>
<text x="3257.6" y="1483.7" font-size="18" fill="#555555" text-anchor="middle" transform="rotate(-90 3257.6 1483.7)" dy="6">OPERATION COUNT</text>
<polygon points="2035.0,1750.0 2035.0,1544.3 2093.4,1734.0 2151.9,1420.7 2151.9,1750.0" fill="#d8d2d0" stroke="#cfc6c4" stroke-width="1"/>
<polygon points="2210.3,1750.0 2210.3,1240.0 2268.8,1283.4 2327.2,1259.5 2385.7,1331.4 2444.2,1583.2 2502.6,1729.7 2561.1,1445.9 2561.1,1750.0" fill="#d8d2d0" stroke="#cfc6c4" stroke-width="1"/>
<polygon points="2619.5,1750.0 2619.5,1327.8 2677.9,1337.0 2736.4,1288.0 2794.8,1343.0 2853.3,1604.0 2911.8,1732.0 2970.2,1495.5 2970.2,1750.0" fill="#d8d2d0" stroke="#cfc6c4" stroke-width="1"/>
<polygon points="3028.7,1750.0 3028.7,1409.0 3087.1,1606.0 3145.6,1636.0 3145.6,1750.0" fill="#d8d2d0" stroke="#cfc6c4" stroke-width="1"/>
<polygon points="2037.7,1620.2 2099.1,1427.8 2087.8,1424.4 2032.3,1618.6" fill="#7a706e" />
<polygon points="2099.0,1428.4 2159.6,1286.3 2144.2,1280.1 2087.9,1423.9" fill="#7a706e" />
<circle cx="2035.0" cy="1619.4" r="6.3" fill="#7a706e"/>
<circle cx="2093.4" cy="1426.1" r="9.5" fill="#7a706e"/>
<circle cx="2151.9" cy="1283.2" r="11.8" fill="#7a706e"/>
<polygon points="2211.0,1406.3 2269.4,1400.7 2268.2,1387.8 2209.7,1393.6" fill="#7a706e" />
<polygon points="2268.9,1400.7 2327.3,1400.1 2327.2,1387.1 2268.7,1387.7" fill="#7a706e" />
<polygon points="2328.5,1399.9 2387.0,1388.6 2384.4,1375.5 2326.0,1387.2" fill="#7a706e" />
<polygon points="2379.3,1383.9 2441.1,1594.8 2447.2,1593.1 2392.1,1380.3" fill="#7a706e" />
<polygon points="2447.2,1594.9 2508.5,1414.0 2496.7,1410.2 2441.1,1592.9" fill="#7a706e" />
<polygon points="2508.4,1414.2 2569.4,1253.7 2552.7,1247.7 2496.8,1410.0" fill="#7a706e" />
<circle cx="2210.3" cy="1400.0" r="9.9" fill="#7a706e"/>
<circle cx="2268.8" cy="1394.2" r="10.0" fill="#7a706e"/>
<circle cx="2327.2" cy="1393.6" r="10.0" fill="#7a706e"/>
<circle cx="2385.7" cy="1382.1" r="10.2" fill="#7a706e"/>
<circle cx="2444.2" cy="1593.9" r="6.7" fill="#7a706e"/>
<circle cx="2502.6" cy="1412.1" r="9.7" fill="#7a706e"/>
<circle cx="2561.1" cy="1250.7" r="12.3" fill="#7a706e"/>
<polygon points="2623.2,1427.0 2682.1,1382.3 2673.8,1371.6 2615.8,1417.5" fill="#7a706e" />
<polygon points="2676.3,1383.5 2734.8,1398.0 2738.0,1385.3 2679.6,1370.4" fill="#7a706e" />
<polygon points="2736.5,1398.2 2795.0,1396.9 2794.7,1383.8 2736.3,1385.1" fill="#7a706e" />
<polygon points="2788.6,1392.3 2850.1,1587.2 2856.5,1585.3 2801.1,1388.5" fill="#7a706e" />
<polygon points="2855.2,1589.0 2914.1,1548.0 2909.4,1541.5 2851.4,1583.5" fill="#7a706e" />
<polygon points="2915.7,1545.7 2978.3,1285.0 2962.1,1281.4 2907.8,1543.9" fill="#7a706e" />
<circle cx="2619.5" cy="1422.3" r="9.5" fill="#7a706e"/>
<circle cx="2677.9" cy="1377.0" r="10.3" fill="#7a706e"/>
<circle cx="2736.4" cy="1391.7" r="10.0" fill="#7a706e"/>
<circle cx="2794.8" cy="1390.4" r="10.0" fill="#7a706e"/>
<circle cx="2853.3" cy="1586.2" r="6.8" fill="#7a706e"/>
<circle cx="2911.8" cy="1544.8" r="7.5" fill="#7a706e"/>
<circle cx="2970.2" cy="1283.2" r="11.8" fill="#7a706e"/>
<polygon points="3022.5,1393.1 3083.6,1564.5 3090.6,1562.1 3034.8,1388.9" fill="#7a706e" />
<polygon points="3085.8,1566.7 3144.4,1588.7 3146.7,1582.5 3088.4,1559.8" fill="#7a706e" />
<circle cx="3028.7" cy="1391.0" r="10.0" fill="#7a706e"/>
<circle cx="3087.1" cy="1563.3" r="7.2" fill="#7a706e"/>
<circle cx="3145.6" cy="1585.6" r="6.8" fill="#7a706e"/>
<text x="2033.3" y="1646.0" font-size="19" fill="#111111" text-anchor="middle" >2.02</text>
<text x="2058.5" y="1433.0" font-size="19" fill="#111111" text-anchor="middle" >5.05</text>
<text x="2151.0" y="1258.0" font-size="19" fill="#111111" text-anchor="middle" >7.29</text>
<text x="2199.0" y="1435.0" font-size="19" fill="#111111" text-anchor="middle" >5.46</text>
<text x="2267.7" y="1373.5" font-size="19" fill="#111111" text-anchor="middle" >5.55</text>
<text x="2327.2" y="1427.5" font-size="19" fill="#111111" text-anchor="middle" >5.56</text>
<text x="2404.0" y="1360.3" font-size="19" fill="#111111" text-anchor="middle" >5.74</text>
<text x="2444.0" y="1621.2" font-size="19" fill="#111111" text-anchor="middle" >2.42</text>
<text x="2467.7" y="1418.4" font-size="19" fill="#111111" text-anchor="middle" >5.27</text>
<text x="2521.7" y="1258.0" font-size="19" fill="#111111" text-anchor="middle" >7.80</text>
<text x="2608.4" y="1456.0" font-size="19" fill="#111111" text-anchor="middle" >5.11</text>
<text x="2678.4" y="1355.7" font-size="19" fill="#111111" text-anchor="middle" >5.82</text>
<text x="2735.7" y="1425.3" font-size="19" fill="#111111" text-anchor="middle" >5.59</text>
<text x="2814.4" y="1369.5" font-size="19" fill="#111111" text-anchor="middle" >5.61</text>
<text x="2852.9" y="1614.4" font-size="19" fill="#111111" text-anchor="middle" >2.54</text>
<text x="2930.3" y="1575.0" font-size="19" fill="#111111" text-anchor="middle" >3.19</text>
<text x="2970.0" y="1258.0" font-size="19" fill="#111111" text-anchor="middle" >7.29</text>
<text x="3027.8" y="1369.5" font-size="19" fill="#111111" text-anchor="middle" >5.60</text>
<text x="3066.7" y="1592.5" font-size="19" fill="#111111" text-anchor="middle" >2.90</text>
<text x="3153.7" y="1614.4" font-size="19" fill="#111111" text-anchor="middle" >2.55</text>
</svg></body></html>
